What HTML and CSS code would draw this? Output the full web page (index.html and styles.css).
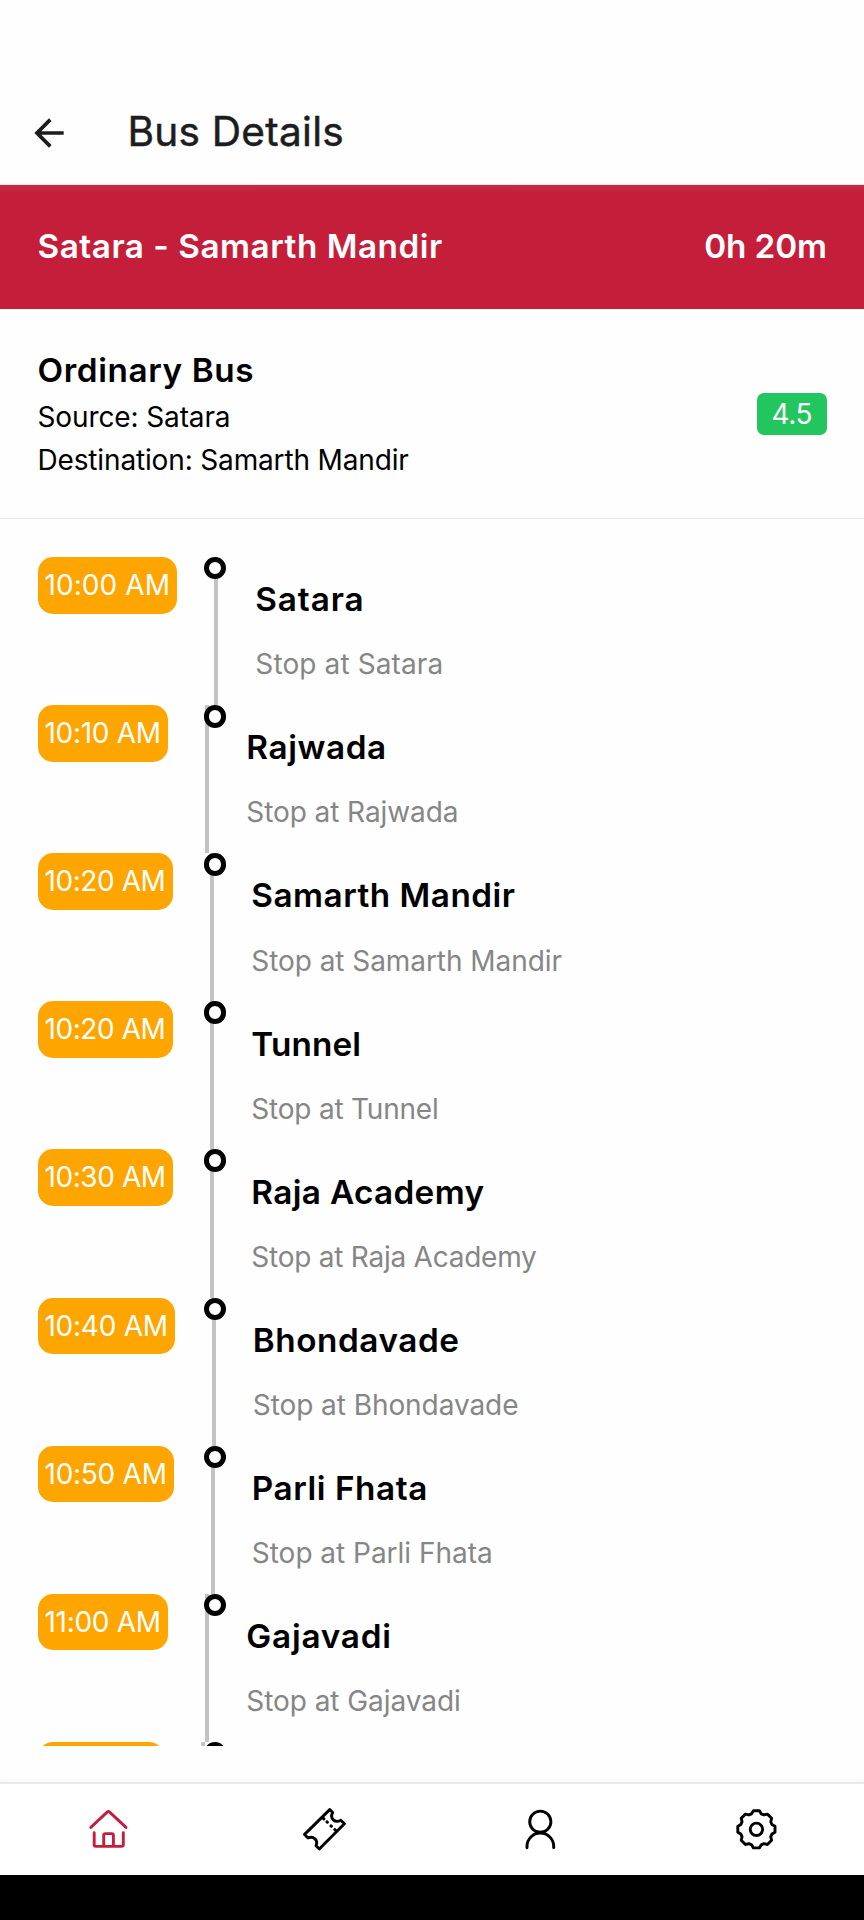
FILE: index.html
```html
<!DOCTYPE html>
<html lang="en">
<head>
<meta charset="utf-8">
<title>Bus Details</title>
<link rel="stylesheet" href="styles.css">
</head>
<body>
<div class="screen">
  <header class="appbar">
    <svg class="back" viewBox="0 0 24 24"><path d="M20 11H7.83l5.59-5.59L12 4l-8 8 8 8 1.41-1.41L7.83 13H20v-2z"/></svg>
    <h1 class="title">Bus Details</h1>
  </header>
  <section class="banner">
    <span class="route">Satara - Samarth Mandir</span>
    <span class="duration">0h 20m</span>
  </section>
  <section class="info">
    <div>
      <h2 class="bus">Ordinary Bus</h2>
      <p class="source">Source: Satara</p>
      <p class="destination">Destination: Samarth Mandir</p>
    </div>
    <span class="rating">4.5</span>
  </section>
  <main class="timeline">
    <article class="stop s1"><span class="time">10:00 AM</span><i class="line"></i><i class="dot"></i><div class="text"><h3>Satara</h3><p>Stop at Satara</p></div></article>
    <article class="stop s2"><span class="time">10:10 AM</span><i class="line"></i><i class="dot"></i><div class="text"><h3>Rajwada</h3><p>Stop at Rajwada</p></div></article>
    <article class="stop s3"><span class="time">10:20 AM</span><i class="line"></i><i class="dot"></i><div class="text"><h3>Samarth Mandir</h3><p>Stop at Samarth Mandir</p></div></article>
    <article class="stop s4"><span class="time">10:20 AM</span><i class="line"></i><i class="dot"></i><div class="text"><h3>Tunnel</h3><p>Stop at Tunnel</p></div></article>
    <article class="stop s5"><span class="time">10:30 AM</span><i class="line"></i><i class="dot"></i><div class="text"><h3>Raja Academy</h3><p>Stop at Raja Academy</p></div></article>
    <article class="stop s6"><span class="time">10:40 AM</span><i class="line"></i><i class="dot"></i><div class="text"><h3>Bhondavade</h3><p>Stop at Bhondavade</p></div></article>
    <article class="stop s7"><span class="time">10:50 AM</span><i class="line"></i><i class="dot"></i><div class="text"><h3>Parli Fhata</h3><p>Stop at Parli Fhata</p></div></article>
    <article class="stop s8"><span class="time">11:00 AM</span><i class="line"></i><i class="dot"></i><div class="text"><h3>Gajavadi</h3><p>Stop at Gajavadi</p></div></article>
    <article class="stop s9"><span class="time"></span><i class="line"></i><i class="dot"></i></article>
  </main>
  <nav class="tabs">
    <a class="tab active"><svg viewBox="0 0 44 44"><path d="M4.8 20.4 21.4 4.9q1-.9 2 0L40 20.4M8.2 25.7V37.8q0 1.6 1.6 1.6H35.7q1.6 0 1.6-1.6V25.7M17.7 39.4V28.2q0-1.6 1.6-1.6H25.8q1.6 0 1.6 1.6V39.4"/></svg></a>
    <a class="tab"><svg viewBox="0 0 44 44"><path d="M27.7 2.6 30.7 5.5C28.9 8.5 29.7 11.3 31.4 12.9 33.2 14.6 36 14.8 38.8 13.2L42.4 16.7 17.3 42 14 38.8C15.2 36 14.8 33.6 13 31.9 11.2 30.2 8.6 29.8 6 31L2.6 27.4ZM20.7 10.7 21.9 11.9M25 14.9 25.4 15.3M29 18.9 29.4 19.3M32.8 22.6 34 23.8"/></svg></a>
    <a class="tab"><svg viewBox="0 0 44 44"><circle cx="22.3" cy="14.7" r="10.6"/><path d="M9 40.8V39.4a13.35 13.35 0 0 1 26.7 0V40.8"/></svg></a>
    <a class="tab"><svg viewBox="0 0 44 44"><g transform="translate(22.4 22.3)"><circle r="6.2"/><path d="M-4.8-15.5-3-18.6H3L4.8-15.5 7.57-14.35 10.96-15.2 15.2-10.96 14.35-7.57 15.5-4.8 18.6-3V3L15.5 4.8 14.35 7.57 15.2 10.96 10.96 15.2 7.57 14.35 4.8 15.5 3 18.6H-3L-4.8 15.5-7.57 14.35-10.96 15.2-15.2 10.96-14.35 7.57-15.5 4.8-18.6 3V-3L-15.5-4.8-14.35-7.57-15.2-10.96-10.96-15.2-7.57-14.35Z"/></g></svg></a>
  </nav>
  <div class="system-bar"></div>
</div>
</body>
</html>
```
FILE: styles.css
```css
* { box-sizing: border-box; margin: 0; padding: 0; }
body { background: #fefefe; font-family: Inter, Roboto, sans-serif; font-size: 28px; color: #000; }
.screen { width: 864px; height: 1920px; display: flex; flex-direction: column; overflow: hidden; }

.appbar { height: 185px; flex: none; display: flex; align-items: flex-start; padding: 106.5px 0 0 27px; gap: 56.4px; border-bottom: 1px solid #e8e4e5; }
.back { width: 44px; height: 44px; margin-top: 4px; fill: #1c1c1e; }
.title { font-size: 40.6px; line-height: 50px; font-weight: 400; letter-spacing: .26px; color: #1d1d1f; -webkit-text-stroke: .5px #1d1d1f; }

.banner { height: 124px; flex: none; display: flex; align-items: center; justify-content: space-between; padding: 0 37px 1.5px 37.5px; color: #fff; font-size: 33.3px; font-weight: 620; background: linear-gradient(rgba(200,70,90,.4), rgba(196,30,58,0) 8px) #c41e3a; }
.route { letter-spacing: .52px; }
.duration { letter-spacing: -.1px; }

.info { height: 210px; flex: none; display: flex; justify-content: space-between; align-items: flex-start; padding: 42.4px 37.5px 0; border-bottom: 1px solid #e9e9e9; }
.bus { font-size: 33.3px; line-height: 39px; font-weight: 620; letter-spacing: .6px; margin-bottom: 5.9px; }
.info p { line-height: 42.7px; }
.source { letter-spacing: -.12px; }
.destination { letter-spacing: -.15px; }
.rating { width: 69.5px; height: 42px; margin-top: 41.6px; border-radius: 7px; background: #22c55e; color: #fff; text-align: center; line-height: 42.5px; letter-spacing: -.4px; }

.timeline { height: 1226.7px; flex: none; overflow: hidden; padding: 38px 37.5px 0; }
.stop { position: relative; height: 148.12px; display: flex; align-items: flex-start; }
.time { width: var(--pill); height: 56.6px; margin-right: 37px; padding-left: 7px; flex: none; border-radius: 15px; background: #ffa500; color: #fff; line-height: 56.6px; white-space: nowrap; letter-spacing: var(--time-ls); }
.line { width: 4px; height: 100%; flex: none; background: #c3c3c3; }
.dot { position: absolute; left: 166.5px; top: 0; width: 22.4px; height: 22.4px; border: 5.5px solid #000; border-radius: 50%; background: #fff; }
.text { padding: 22.2px 0 0 37.3px; white-space: nowrap; }
.text h3 { font-size: 33.3px; line-height: 40px; font-weight: 620; letter-spacing: calc(var(--name-ls) - .52px); margin-bottom: 27.2px; }
.text p { line-height: 36px; color: #868686; letter-spacing: var(--note-ls); }
.s1 { --pill: 139.5px; --time-ls: .07px; --name-ls: 1.42px; --note-ls: .12px; }
.s2 { --pill: 130.5px; --time-ls: -.31px; --name-ls: 1.12px; --note-ls: -.08px; }
.s3 { --pill: 135.5px; --time-ls: -.42px; --name-ls: 1.02px; --note-ls: -.06px; }
.s4 { --pill: 135.5px; --time-ls: -.42px; --name-ls: .66px; --note-ls: -.21px; }
.s5 { --pill: 135.5px; --time-ls: -.42px; --name-ls: .86px; --note-ls: -.24px; }
.s6 { --pill: 137px; --time-ls: -.27px; --name-ls: 1.08px; --note-ls: -.07px; }
.s7 { --pill: 136px; --time-ls: -.26px; --name-ls: 1.07px; --note-ls: -.02px; }
.s8 { --pill: 130.5px; --time-ls: -.31px; --name-ls: 1.31px; --note-ls: -.06px; }
.s9 { --pill: 126.5px; }

.tabs { height: 93px; margin-top: auto; flex: none; display: grid; grid-template-columns: repeat(4, 1fr); background: #fff; border-top: 2px solid #e9e9e9; box-shadow: 0 -1px 3px rgba(0,0,0,.04); }
.tab { display: flex; align-items: center; justify-content: center; padding-bottom: 1.6px; color: #000; }
.tab.active { color: #c41e3a; }
.tab svg { width: 44px; height: 44px; fill: none; stroke: currentColor; stroke-width: 2.9; stroke-linecap: round; stroke-linejoin: round; }
.system-bar { height: 44.7px; flex: none; background: #000; }
```
